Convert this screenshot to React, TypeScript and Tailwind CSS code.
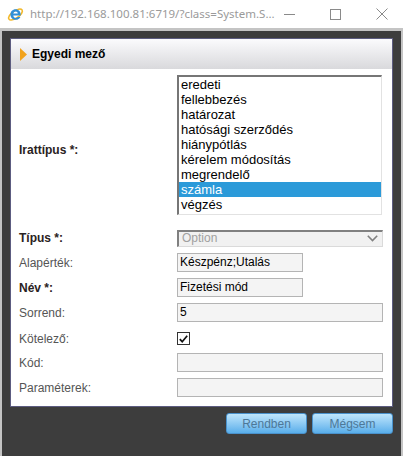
import React from 'react'

const items = [
  'eredeti',
  'fellebbezés',
  'határozat',
  'hatósági szerződés',
  'hiánypótlás',
  'kérelem módosítás',
  'megrendelő',
  'számla',
  'végzés',
]

const arial = { fontFamily: '"Liberation Sans", Arial, sans-serif' }

function IeLogo() {
  return (
    <svg width="17" height="17" viewBox="0 0 17 17">
      <ellipse cx="8.5" cy="8.5" rx="8" ry="3.6" fill="none" stroke="#f2b829" strokeWidth="1.6" transform="rotate(-35 8.5 8.5)" />
      <path d="M8.6 3.2c-3 0-5.2 2.3-5.2 5.3s2.2 5.3 5.3 5.3c2.2 0 3.9-1.1 4.7-2.9h-2.8c-.5.7-1.1 1-1.9 1-1.3 0-2.3-.9-2.4-2.3h7.3c.1-.4.1-.7.1-1.1 0-3-2.2-5.3-5.1-5.3zm-2.3 4.3c.2-1.2 1.1-2 2.3-2s2.1.8 2.2 2H6.3z" fill="#2f8fd8" />
    </svg>
  )
}

function Label({ text, bold }: { text: string; bold?: boolean }) {
  return (
    <div
      className={bold ? 'w-[158px] shrink-0 text-[12px] font-bold text-[#2a2222]' : 'w-[158px] shrink-0 text-[12px] text-[#555]'}
      style={arial}
    >
      {text}
    </div>
  )
}

function TextInput({ value, short }: { value?: string; short?: boolean }) {
  return (
    <div
      className={
        (short ? 'w-[126px] ' : 'w-[206px] ') +
        'h-[19px] border border-[#b4b4b4] bg-[#f4f4f4] px-[2px] text-[12px] leading-[17px] text-black'
      }
      style={arial}
    >
      {value}
    </div>
  )
}

export default function App() {
  return (
    <div className="flex h-[456px] w-[403px] flex-col bg-white" style={arial}>
      {/* title bar */}
      <div className="flex h-[28px] shrink-0 items-center bg-white pl-[7px]">
        <IeLogo />
        <span
          className="ml-[6px] whitespace-nowrap text-[11.5px] text-[#9a9a9a]"
          style={{ fontFamily: '"Noto Sans", "Open Sans", sans-serif' }}
        >
          http://192.168.100.81:6719/?class=System.S...
        </span>
        <svg className="ml-auto shrink-0" width="12" height="12" viewBox="0 0 12 12">
          <path d="M0 6.5h11" stroke="#8a8a8a" strokeWidth="1" />
        </svg>
        <svg className="ml-[34px] shrink-0" width="11" height="11" viewBox="0 0 11 11">
          <rect x="0.5" y="0.5" width="10" height="10" fill="none" stroke="#8a8a8a" />
        </svg>
        <svg className="ml-[35px] mr-[15px] shrink-0" width="12" height="12" viewBox="0 0 12 12">
          <path d="M0.5 0.5l11 11M11.5 0.5l-11 11" stroke="#8a8a8a" strokeWidth="1" />
        </svg>
      </div>

      {/* window frame */}
      <div className="flex flex-1 flex-col border-t-[3px] border-l-2 border-r-2 border-[#c4c4c4] bg-[#3d3d3d] px-[8px] pt-[7px]">
        <div className="flex h-[369px] flex-col border border-[#5c5c80] bg-white">
          <div className="flex h-[30px] shrink-0 items-center bg-gradient-to-b from-[#fbfbfd] to-[#d9d9dc] pl-[9px]">
            <svg width="7" height="13" viewBox="0 0 7 13">
              <path d="M0 0l7 6.5L0 13z" fill="#f1a21c" />
            </svg>
            <span className="ml-[5px] text-[12px] font-bold text-black">Egyedi mező</span>
          </div>

          <div className="flex flex-col px-[8px] pt-[6px]">
            <div className="flex items-center">
              <div className="pt-[10px]">
                <Label text="Irattípus *:" bold />
              </div>
              <div className="h-[140px] w-[205px] border-t-2 border-l-2 border-r border-b border-t-[#767676] border-l-[#767676] border-r-[#e2e2e2] border-b-[#e2e2e2] bg-white">
                {items.map((it) => (
                  <div
                    key={it}
                    className={
                      it === 'számla'
                        ? 'h-[15px] bg-[#2b9ad9] pl-[2px] text-[13px] leading-[15px] text-white'
                        : 'h-[15px] pl-[2px] text-[13px] leading-[15px] text-black'
                    }
                  >
                    {it}
                  </div>
                ))}
              </div>
            </div>

            <div className="mt-[14px] flex items-center">
              <Label text="Típus *:" bold />
              <div className="flex h-[17px] w-[206px] items-center border-t-2 border-l-2 border-r border-b border-t-[#808080] border-l-[#808080] border-r-[#dadada] border-b-[#dadada] bg-[#f1f1f1] pl-[3px] pr-[4px]">
                <span className="text-[12px] leading-[13px] text-[#a0a0a0]">Option</span>
                <svg className="ml-auto" width="11" height="7" viewBox="0 0 11 7">
                  <path d="M0.8 0.8l4.7 4.7 4.7-4.7" fill="none" stroke="#808080" strokeWidth="1.6" />
                </svg>
              </div>
            </div>

            <div className="mt-[6px] flex items-center">
              <Label text="Alapérték:" />
              <TextInput value="Készpénz;Utalás" short />
            </div>

            <div className="mt-[6px] flex items-center">
              <Label text="Név *:" bold />
              <TextInput value="Fizetési mód" short />
            </div>

            <div className="mt-[6px] flex items-center">
              <Label text="Sorrend:" />
              <TextInput value="5" />
            </div>

            <div className="mt-[10px] flex h-[13px] items-center">
              <Label text="Kötelező:" />
              <div className="flex h-[13px] w-[13px] items-center justify-center border border-[#333] bg-white">
                <svg width="9" height="8" viewBox="0 0 9 8">
                  <path d="M0.8 4.2l2.4 2.5L8.2 0.8" fill="none" stroke="#111" strokeWidth="1.7" />
                </svg>
              </div>
            </div>

            <div className="mt-[8px] flex items-center">
              <Label text="Kód:" />
              <TextInput />
            </div>

            <div className="mt-[6px] flex items-center">
              <Label text="Paraméterek:" />
              <TextInput />
            </div>
          </div>
        </div>

        <div className="mt-[6px] flex justify-end gap-[5px]">
          <button className="h-[21px] w-[81px] rounded-[3px] border border-[#4a92cc] bg-gradient-to-b from-[#bfe6fc] to-[#58aeea] text-[12px] text-[#4d7898]">
            Rendben
          </button>
          <button className="h-[21px] w-[81px] rounded-[3px] border border-[#4a92cc] bg-gradient-to-b from-[#bfe6fc] to-[#58aeea] text-[12px] text-[#4d7898]">
            Mégsem
          </button>
        </div>
      </div>
    </div>
  )
}
